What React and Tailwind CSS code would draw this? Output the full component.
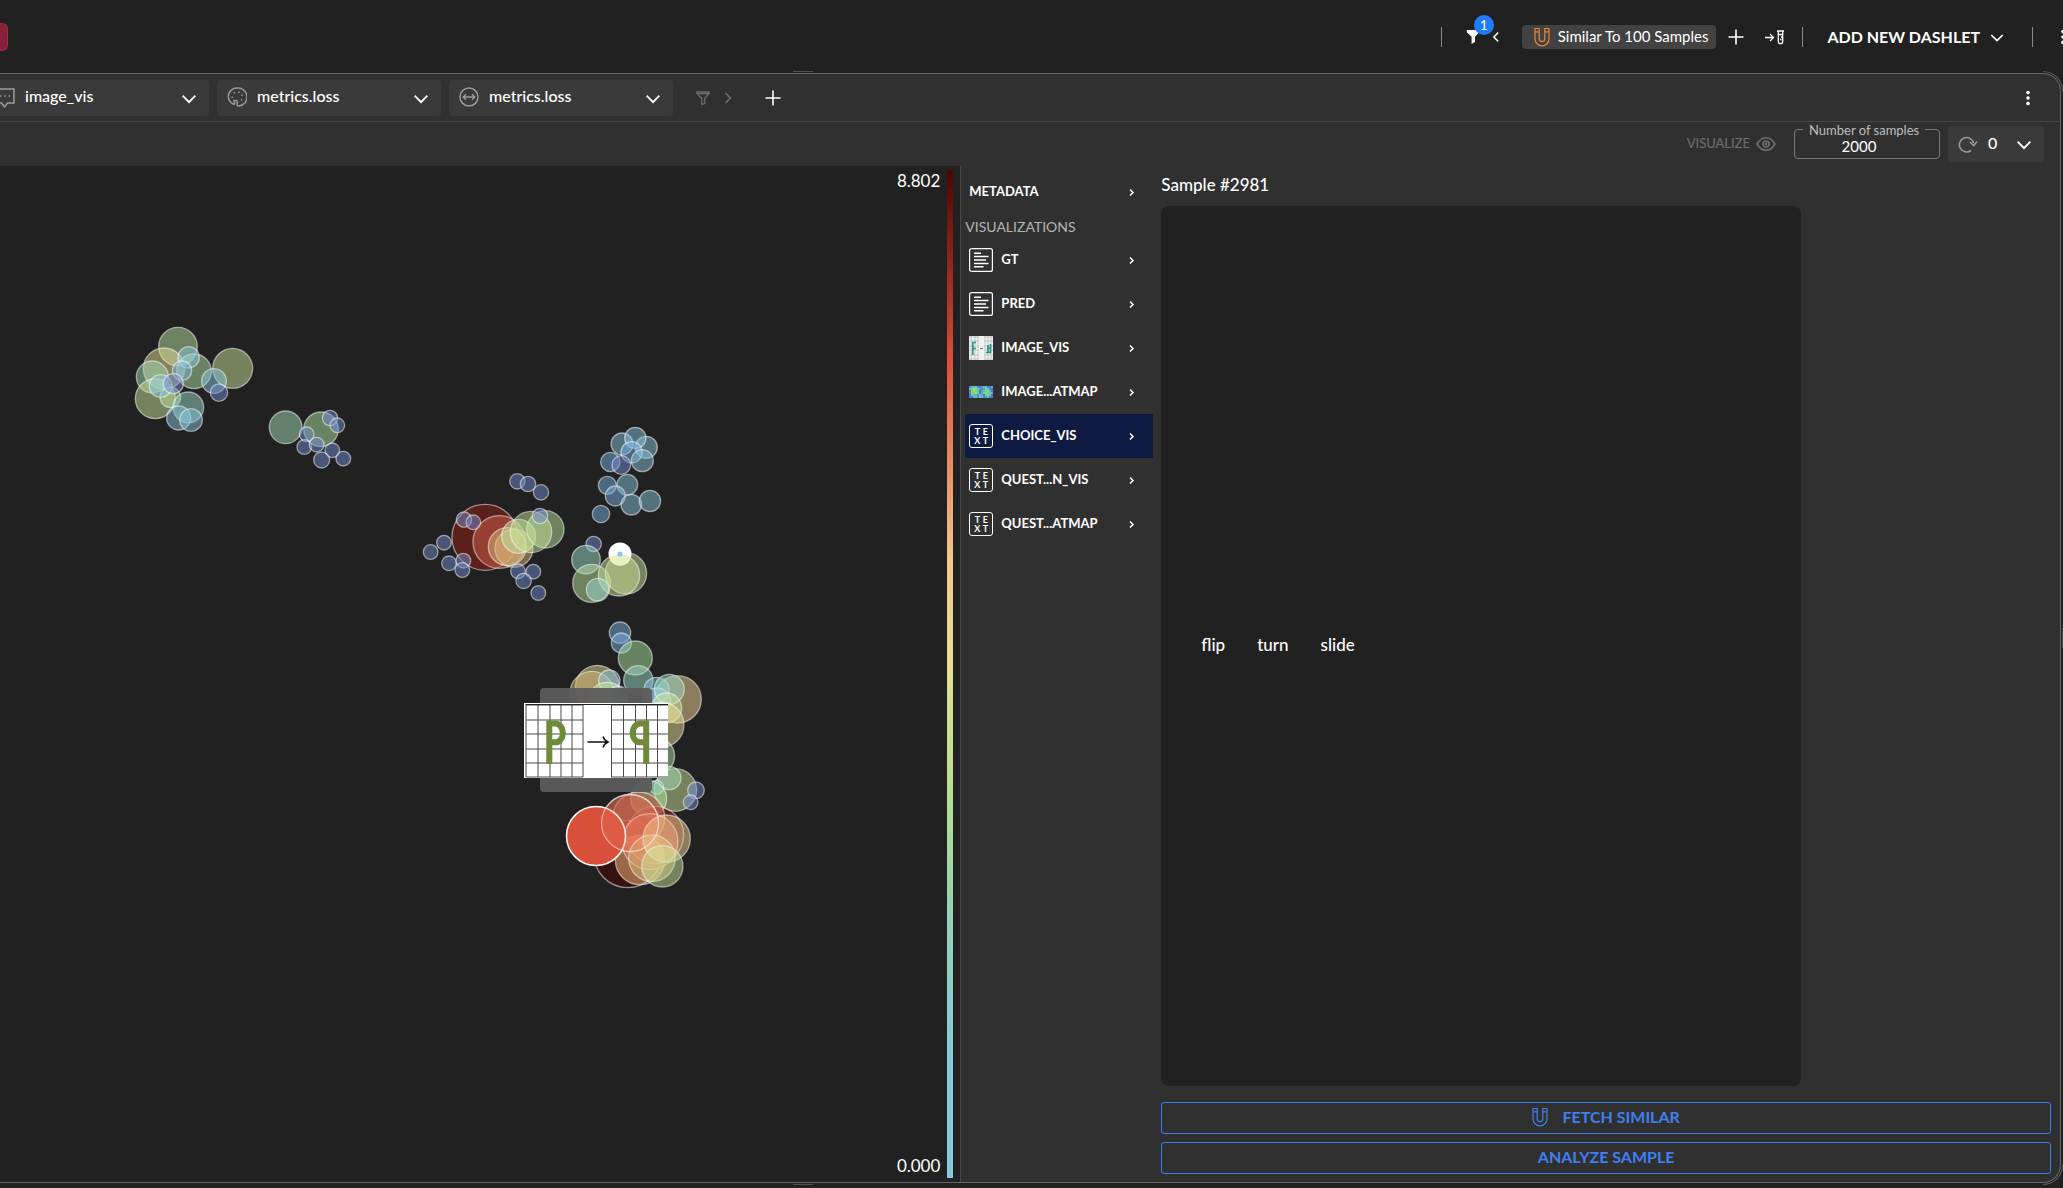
import React from "react";

const C = {
  khaki: "#cbe399",
  moss: "#b9e39f",
  green: "#afe5a3",
  sea: "#a3dfb7",
  teal: "#9ddbcb",
  aqua: "#87c3db",
  sky: "#77afe0",
  indigo: "#718bcd",
  tan: "#f3d797",
  sand: "#e7df97",
  ochre: "#d8b878",
  maroon: "#971f13",
  brick: "#d2604a",
  coral: "#ee7558",
  orange: "#ffbb7d",
  wine: "#4b0500",
};

/* Each cluster is drawn in its own space at three units to the pixel. */
const clusters = [
  {
    x: 120,
    y: 144,
    bubbles: [
      [174, 110, 58, C.moss],
      [132, 176, 62, C.sand],
      [222, 184, 52, C.green],
      [97, 201, 48, C.sea],
      [106, 266, 60, C.khaki],
      [338, 175, 60, C.khaki],
      [206, 142, 32, C.aqua],
      [186, 182, 29, C.sky],
      [151, 262, 31, C.moss],
      [122, 228, 34, C.aqua],
      [160, 221, 30, C.indigo],
      [282, 213, 37, C.aqua],
      [297, 248, 26, C.indigo],
      [205, 292, 46, C.teal],
      [176, 324, 36, C.aqua],
      [213, 330, 34, C.aqua],
      [497, 352, 49, C.sea],
      [603, 358, 52, C.green],
      [630, 324, 23, C.indigo],
      [652, 346, 22, C.indigo],
      [560, 373, 22, C.indigo],
      [553, 411, 22, C.indigo],
      [590, 404, 22, C.indigo],
      [637, 421, 22, C.indigo],
      [605, 450, 24, C.indigo],
      [670, 446, 22, C.indigo],
    ],
  },
  {
    x: 410,
    y: 244,
    bubbles: [
      [225, 382, 99, C.maroon],
      [268, 396, 79, C.brick],
      [312, 415, 57, C.ochre],
      [292, 410, 57, C.ochre],
      [326, 379, 51, C.moss],
      [406, 358, 56, C.moss],
      [363, 366, 62, C.khaki],
      [162, 329, 23, C.indigo],
      [190, 337, 22, C.indigo],
      [390, 318, 23, C.indigo],
      [322, 214, 23, C.indigo],
      [354, 222, 23, C.indigo],
      [393, 247, 23, C.indigo],
      [102, 398, 22, C.indigo],
      [62, 426, 22, C.indigo],
      [117, 460, 22, C.indigo],
      [160, 452, 22, C.indigo],
      [157, 480, 22, C.indigo],
      [324, 484, 22, C.indigo],
      [370, 485, 22, C.indigo],
      [341, 513, 23, C.indigo],
      [385, 549, 22, C.indigo],
      [636, 102, 33, C.aqua],
      [709, 112, 33, C.aqua],
      [676, 84, 32, C.aqua],
      [665, 127, 32, C.sky],
      [697, 152, 33, C.aqua],
      [601, 156, 29, C.sky],
      [634, 165, 28, C.indigo],
      [592, 226, 27, C.sky],
      [652, 224, 31, C.aqua],
      [616, 258, 30, C.sky],
      [664, 284, 31, C.aqua],
      [720, 273, 32, C.aqua],
      [573, 312, 26, C.sky],
      [551, 402, 23, C.indigo],
      [528, 449, 43, C.teal],
      [545, 520, 57, C.moss],
      [648, 490, 62, C.khaki],
      [627, 496, 62, C.khaki],
      [563, 539, 34, C.teal],
    ],
  },
  {
    x: 500,
    y: 444,
    bubbles: [
      [360, 68, 32, C.sky],
      [364, 99, 30, C.sky],
      [406, 144, 51, C.green],
      [292, 232, 66, C.sand],
      [276, 250, 66, C.ochre],
      [328, 212, 32, C.aqua],
      [322, 275, 58, C.khaki],
      [354, 258, 30, C.sky],
      [415, 211, 44, C.teal],
      [533, 268, 71, C.tan],
      [470, 240, 38, C.aqua],
      [470, 276, 42, C.aqua],
      [508, 238, 45, C.teal],
      [500, 294, 45, C.khaki],
      [484, 344, 68, C.sand],
      [470, 438, 54, C.green],
      [526, 540, 64, C.khaki],
      [508, 504, 35, C.sea],
      [470, 532, 21, C.aqua],
      [588, 541, 25, C.indigo],
      [572, 577, 22, C.indigo],
      [446, 566, 54, C.green],
      [383, 732, 101, C.wine],
      [465, 675, 86, C.maroon],
      [416, 624, 78, C.brick],
      [420, 750, 74, C.orange],
      [390, 640, 86, C.brick],
      [450, 695, 84, C.coral],
      [456, 745, 70, C.ochre],
      [500, 686, 71, C.tan],
      [487, 769, 62, C.khaki],
    ],
  },
];

const chevrons = {
  down: "M4 8.5l7 7 7-7",
  right: "M8 5l6 6-6 6",
  left: "M14 5l-6 6 6 6",
};

function Chevron({ dir = "down", className, weight = 2 }) {
  return (
    <svg viewBox="0 0 22 22" className={className} fill="none" stroke="currentColor" strokeWidth={weight} aria-hidden="true">
      <path d={chevrons[dir]} />
    </svg>
  );
}

function Magnet({ className }) {
  return (
    <svg viewBox="0 0 16 20" className={className} fill="none" stroke="currentColor" strokeWidth="1.2" aria-hidden="true">
      <path d="M1 1.5h4.2v10.3a2.8 2.8 0 0 0 5.6 0V1.5H15v10.3a7 7 0 0 1-14 0zM1 4.8h4.2M10.8 4.8H15" />
    </svg>
  );
}

function Plus({ className }) {
  return (
    <svg viewBox="0 0 16 16" className={className} stroke="currentColor" strokeWidth="1.6" aria-hidden="true">
      <path d="M8 0.5v15M0.5 8h15" />
    </svg>
  );
}

function Kebab() {
  return (
    <svg viewBox="0 0 4 16" className="h-4 w-1" fill="currentColor" aria-hidden="true">
      <circle cx="2" cy="2.6" r="1.8" />
      <circle cx="2" cy="8" r="1.8" />
      <circle cx="2" cy="13.4" r="1.8" />
    </svg>
  );
}

function Divider() {
  return <span className="h-5 w-px bg-[#8c8c8c]" />;
}

function Header() {
  return (
    <header className="flex h-[73px] shrink-0 items-center justify-between overflow-hidden text-white">
      <span className="h-7 w-2 rounded-r-md border border-l-0 border-[#b3243f] bg-[#8a1f3c]" />
      <div className="flex items-center">
        <Divider />
        <button aria-label="Filters" className="relative ml-6 flex items-center">
          <svg viewBox="0 0 14 14" className="h-[14px] w-[14px]" fill="currentColor" aria-hidden="true">
            <path d="M.8 0h12.400v2.200L9 6.800V12l-3.400 2V6.800L.8 2.200z" />
          </svg>
          <span className="absolute -top-[15px] left-2 flex h-5 w-5 items-center justify-center rounded-full bg-[#1f7bff] text-sm">1</span>
        </button>
        <button aria-label="Collapse filters" className="ml-2">
          <Chevron dir="left" className="h-4 w-4" />
        </button>
        <button className="ml-[18px] flex h-6 items-center gap-2 rounded bg-[#424242] pr-2 pl-3 text-[15px]">
          <Magnet className="h-5 w-4 text-[#e8873a]" />
          Similar To 100 Samples
        </button>
        <button aria-label="Add filter" className="ml-3">
          <Plus className="h-4 w-4" />
        </button>
        <button aria-label="Send to test" className="ml-5">
          <svg viewBox="0 0 22 16" className="h-4 w-[22px]" fill="none" stroke="currentColor" strokeWidth="1.3" aria-hidden="true">
            <path d="M1 8.500h8M6 5l3.500 3.500L6 12M13 2h7M14.300 2v10.500a2.200 2.200 0 0 0 4.400 0V2M14.300 5.500h4.400M17 8h1.500M16 10.500h1.500" />
          </svg>
        </button>
        <span className="ml-4 flex">
          <Divider />
        </span>
        <button className="ml-6 flex items-center gap-2 text-base font-bold">
          ADD NEW DASHLET
          <Chevron className="h-[18px] w-[18px]" />
        </button>
        <span className="ml-[26px] flex">
          <Divider />
        </span>
        <button aria-label="More options" className="-mr-0.5 ml-7">
          <Kebab />
        </button>
      </div>
    </header>
  );
}

const fieldIcons = {
  comment: (
    <path d="M1 2h18v14h-6.500l-3 4-3-4H1zM5 9h1.500M9.300 9h1.500M13.500 9H15" />
  ),
  palette: (
    <path d="M10 1a8.500 8.500 0 0 0-3.500 16.300c.8.300 1.300-.4 1-1.300l-.4-2.500h2.200c.6 0 .9.400.9 1v3.300c0 1 .8 1.500 1.700 1.200A8.900 8.900 0 0 0 10 1zM5.200 9.500v1.500M7.500 5v1.500M12 4.500V6M15 7.500V9M14.500 12v1.500" />
  ),
  size: <path d="M10 1a9 9 0 1 1 0 18 9 9 0 0 1 0-18zM4.500 10h11M7 7.200L4.300 10 7 12.800M13 7.200l2.700 2.800-2.700 2.800" />,
};

function FieldSelect({ icon, value, label }) {
  return (
    <label className="relative flex h-9 w-56 shrink-0 items-center rounded bg-[#3a3a3a]">
      <svg viewBox="0 0 20 21" className="pointer-events-none absolute left-[10px] h-[21px] w-5 text-[#9a9a9a]" fill="none" stroke="currentColor" strokeWidth="1.5" aria-hidden="true">
        {fieldIcons[icon]}
      </svg>
      <select aria-label={label} className="h-full w-full appearance-none bg-transparent pr-10 pb-1 pl-10 text-base font-medium text-white">
        <option>{value}</option>
      </select>
      <Chevron className="pointer-events-none absolute right-[10px] h-5 w-5 text-white" />
    </label>
  );
}

function TabBar() {
  return (
    <div className="flex h-12 shrink-0 items-center justify-between border-b border-[#464646] pr-[30px]">
      <div className="-ml-[15px] flex items-center gap-2">
        <FieldSelect icon="comment" value="image_vis" label="Preview" />
        <FieldSelect icon="palette" value="metrics.loss" label="Color" />
        <FieldSelect icon="size" value="metrics.loss" label="Size" />
        <div className="ml-[15px] flex items-center text-[#6c6c6c]">
          <button aria-label="Filter">
            <svg viewBox="0 0 14 14" className="h-[14px] w-[14px]" fill="none" stroke="currentColor" strokeWidth="1.3" aria-hidden="true">
              <path d="M1 1h12v1.500L8.700 7.500v5l-2.900 1v-6L1 2.500zM1 2.700h12" />
            </svg>
          </button>
          <button aria-label="Expand filter" className="ml-[9px]">
            <Chevron dir="right" className="h-[18px] w-[18px]" />
          </button>
        </div>
        <button aria-label="Add" className="ml-5 text-white">
          <Plus className="h-4 w-4" />
        </button>
      </div>
      <button aria-label="Dashlet options" className="text-white">
        <Kebab />
      </button>
    </div>
  );
}

function Toolbar() {
  return (
    <div className="flex h-11 shrink-0 items-center justify-end pr-4">
      <button className="mr-[18px] flex items-center gap-[6px] text-[13px] text-[#707070]">
        VISUALIZE
        <svg viewBox="0 0 20 16" className="h-4 w-5" fill="none" stroke="currentColor" strokeWidth="1.6" aria-hidden="true">
          <path d="M1 8c2.500-4.300 5.600-6.300 9-6.300S16.500 3.700 19 8c-2.500 4.300-5.600 6.300-9 6.300S3.500 12.300 1 8z" />
          <circle cx="10" cy="8" r="3" />
          <circle cx="10" cy="8" r="0.600" />
        </svg>
      </button>
      <fieldset className="mr-2 mb-2 w-[146px] rounded border border-[#7a7a7a]">
        <legend className="ml-2 px-[6px] text-[13px] leading-4 text-[#bdbdbd]">
          <label htmlFor="samples">Number of samples</label>
        </legend>
        <input id="samples" defaultValue="2000" className="-mt-1 block h-6 w-full bg-transparent pr-4 text-center text-[15px] text-white outline-none" />
      </fieldset>
      <label className="relative flex h-9 w-24 items-center rounded bg-[#3a3a3a]">
        <svg viewBox="0 0 20 18" className="pointer-events-none absolute left-[10px] h-[18px] w-5 text-[#9a9a9a]" fill="none" stroke="currentColor" strokeWidth="1.6" aria-hidden="true">
          <path d="M13 15.500A7.200 7.200 0 1 1 15.600 8M11.800 7l4 3.500L19 6.500" />
        </svg>
        <select aria-label="Refresh interval" className="h-full w-full appearance-none bg-transparent pb-0.5 pl-10 text-base font-medium text-white">
          <option>0</option>
        </select>
        <Chevron className="pointer-events-none absolute right-[10px] h-5 w-5 text-white" />
      </label>
    </div>
  );
}

function PreviewTooltip() {
  const cols = [0, 12, 24, 35, 46, 57];
  const rows = [2, 17, 31, 46, 60, 74];
  return (
    <div className="absolute top-[522px] left-[540px] flex h-[104px] w-28 items-center justify-center rounded bg-[#5c5c5c]/95">
      <svg viewBox="0 0 144 75" className="h-[75px] w-36 shrink-0" role="img" aria-label="Sample preview">
        <rect width="144" height="75" fill="#fff" />
        <g stroke="#4a4a4a" strokeWidth="1">
          {cols.map((c) => (
            <path key={c} d={`M${c + 2} 1v73M${c + 87.5} 1v73`} />
          ))}
          {rows.map((r) => (
            <path key={r} d={`M2 ${r}h57M87 ${r}h57`} />
          ))}
          <path d="M2 1.500h142" stroke="#222" />
        </g>
        <g fill="none" stroke="#6f8a38" strokeWidth="6">
          <path d="M25.300 61V20.500h6a7.500 9.300 0 0 1 0 18.800h-6" />
          <path d="M122.200 61V20.500h-6a7.500 9.300 0 0 0 0 18.800h6" />
        </g>
        <path d="M63.500 39H84M79 33.500c1 3 2.500 4.500 5 5.500-2.500 1-4 2.500-5 5.500" fill="none" stroke="#111" strokeWidth="1.400" />
      </svg>
    </div>
  );
}

function Scatter() {
  return (
    <section className="relative overflow-hidden border-r border-[#484848] bg-[#212121]">
      <svg className="absolute inset-0 h-full w-full" role="img" aria-label="Latent space scatter">
        {clusters.map((c) => (
          <g key={c.x} transform={`translate(${c.x} ${c.y}) scale(0.3333)`} stroke="#fff" strokeOpacity="0.5" strokeWidth="4" fillOpacity="0.5">
            {c.bubbles.map(([x, y, r, fill], i) => (
              <circle key={i} cx={x} cy={y} r={r} fill={fill} />
            ))}
          </g>
        ))}
        <circle cx="620" cy="388" r="11.500" fill="#fff" />
        <path d="M609 391a11.500 11.500 0 0 0 22 0q-11-5-22 0z" fill="#e8f0c4" />
        <circle cx="620" cy="388" r="2.600" fill="#93c1f5" />
        <circle cx="596" cy="670" r="29.500" fill="#d9503a" stroke="#fff" strokeWidth="1.500" />
        <circle cx="630" cy="657" r="28.500" fill="#f08a68" fillOpacity="0.2" stroke="#fff" strokeOpacity="0.5" strokeWidth="1.300" />
      </svg>
      <PreviewTooltip />
      <div className="relative ml-auto flex h-full w-fit gap-[7px] pt-1 pr-[7px] pb-1 text-[17px] text-white">
        <div className="flex flex-col justify-between">
          <span className="leading-[22px]">8.802</span>
          <span className="leading-6">0.000</span>
        </div>
        <div className="w-[6px] bg-[linear-gradient(to_bottom,#4d0500_0%,#8f251b_9%,#dc4f38_19%,#eb8a62_29%,#f5c98a_39%,#e9dd92_49%,#b6e08f_61%,#92d3b4_74%,#84cadc_88%)]" />
      </div>
    </section>
  );
}

function ListIcon() {
  return (
    <svg viewBox="0 0 24 24" className="h-6 w-6" fill="none" stroke="#fff" strokeWidth="1.2" aria-hidden="true">
      <rect x="0.600" y="0.600" width="22.800" height="22.800" rx="2" />
      <path d="M5 5.200h7M5 8.600h14.500M5 12h12M5 15.400h14.500M5 18.800h9.500" strokeWidth="1.500" />
    </svg>
  );
}

function TextIcon() {
  return (
    <span className="grid h-6 w-6 grid-cols-2 content-center justify-items-center rounded-[3px] border border-white px-[3px] text-[9px] leading-[9px] font-bold" aria-hidden="true">
      <span>T</span>
      <span>E</span>
      <span>X</span>
      <span>T</span>
    </span>
  );
}

function GridIcon() {
  return (
    <svg viewBox="0 0 24 24" className="h-6 w-6" aria-hidden="true">
      <rect width="24" height="24" fill="#f2f2f2" />
      <path d="M0 1h10M0 5h10M0 10h10M0 14h10M0 19h10M0 23h10M15 1h9M15 5h9M15 10h9M15 14h9M15 19h9M15 23h9M2 0v24M6 0v24M9 0v24M16 0v24M19 0v24M22 0v24" stroke="#bdbdbd" strokeWidth="0.800" />
      <path d="M3.800 19V6.500H7M3.800 12.500h3M21.500 8v8.500H17M19 9v7M19 12h2" fill="none" stroke="#1f9c82" strokeWidth="1.700" />
      <path d="M11 12.500h3" stroke="#777" strokeWidth="1.200" />
    </svg>
  );
}

const heat = [
  "#5a78d6", "#62b8d0", "#5fd0a0", "#58c8c8", "#5a8ce0", "#6470d0", "#50a8e0", "#58d098", "#60c0d8", "#5a80e0", "#6a78d8", "#58b0e0",
  "#58c0d8", "#60d880", "#b0d850", "#80e070", "#58d0b0", "#58a0e8", "#6078d8", "#5a98e0", "#70e078", "#58d0a8", "#5880e0", "#6a70d0",
  "#6878d8", "#58d890", "#e0b848", "#70e060", "#58c8c0", "#5870d8", "#c08050", "#58c0d0", "#60d8a0", "#80e068", "#58b8d8", "#5a78d8",
  "#5a90e0", "#70e078", "#68d890", "#a8e050", "#58d0b8", "#6868d0", "#58a0e0", "#60d888", "#90e058", "#58d0a0", "#60d890", "#58a8e0",
  "#7060c8", "#58c8b8", "#60d088", "#58b8d8", "#6880e0", "#58d0a0", "#58a8d8", "#5878d8", "#58c8c0", "#80e068", "#58c0d0", "#7068d0",
  "#5880d8", "#6868c8", "#58b0d8", "#58d0a8", "#5890e0", "#60d090", "#58c0c8", "#6878d8", "#5898e0", "#58c8b8", "#5880d8", "#6078d0",
];

function HeatIcon() {
  return (
    <svg viewBox="0 0 24 12" className="h-3 w-6" aria-hidden="true">
      {heat.map((fill, i) => (
        <rect key={i} x={(i % 12) * 2} y={Math.floor(i / 12) * 2} width="2" height="2" fill={fill} />
      ))}
    </svg>
  );
}

const items = [
  { label: "GT", icon: <ListIcon /> },
  { label: "PRED", icon: <ListIcon /> },
  { label: "IMAGE_VIS", icon: <GridIcon /> },
  { label: "IMAGE...ATMAP", icon: <HeatIcon /> },
  { label: "CHOICE_VIS", icon: <TextIcon />, active: true },
  { label: "QUEST...N_VIS", icon: <TextIcon /> },
  { label: "QUEST...ATMAP", icon: <TextIcon /> },
];

function Sidebar() {
  return (
    <nav className="w-[188px] shrink-0 pt-1 text-[13px] font-bold text-white">
      <button className="flex h-11 w-full items-center justify-between pr-4 pl-1">
        METADATA
        <Chevron dir="right" className="h-[11px] w-[11px]" weight={3} />
      </button>
      <h2 className="h-6 text-sm leading-[26px] font-normal text-[#b4b4b4]">VISUALIZATIONS</h2>
      {items.map((item) => (
        <button key={item.label} className={item.active ? "flex h-11 w-full items-center gap-2 bg-[#0f1a42] pr-4 pl-1" : "flex h-11 w-full items-center gap-2 pr-4 pl-1"}>
          {item.icon}
          <span className="flex-1 text-left">{item.label}</span>
          <Chevron dir="right" className="h-[11px] w-[11px]" weight={3} />
        </button>
      ))}
    </nav>
  );
}

function Detail() {
  return (
    <section className="flex min-w-0 flex-1 flex-col text-white">
      <h1 className="flex h-10 shrink-0 items-center pb-0.5 text-[17px] font-medium">Sample #2981</h1>
      <div className="flex w-full max-w-[640px] flex-1 items-center gap-8 rounded-lg bg-[#212121] pb-0.5 pl-10 text-[17px] font-medium">
        <span>flip</span>
        <span>turn</span>
        <span>slide</span>
      </div>
      <div className="mt-4 mb-2 flex flex-col gap-2 text-base font-bold text-[#3f7ff0]">
        <button className="flex h-8 items-center justify-center gap-[14px] rounded-[3px] border border-[#3f7ff0] pb-0.5">
          <Magnet className="h-5 w-4" />
          FETCH SIMILAR
        </button>
        <button className="h-8 rounded-[3px] border border-[#3f7ff0] pb-0.5">ANALYZE SAMPLE</button>
      </div>
    </section>
  );
}

export default function App() {
  return (
    <div className="flex h-screen flex-col overflow-hidden bg-[#212121] font-['Lato','Noto_Sans',sans-serif]">
      <Header />
      <main className="relative mr-0.5 mb-[5px] flex min-h-0 flex-1 flex-col">
        <span className="absolute -top-0.5 left-[793px] h-px w-5 bg-[#505050]" />
        <span className="absolute -bottom-0.5 left-[793px] h-px w-5 bg-[#505050]" />
        <span className="absolute -top-0.5 -right-0.5 h-5 w-5 rounded-tr-[20px] border-t border-r border-[#5a5a5a]" />
        <span className="absolute -right-0.5 -bottom-0.5 h-5 w-5 rounded-br-[20px] border-r border-b border-[#5a5a5a]" />
        <span className="absolute top-1/2 -right-0.5 h-5 w-px bg-[#505050]" />
        <div className="flex min-h-0 flex-1 flex-col overflow-hidden rounded-r-[18px] border border-l-0 border-[#666666] bg-[#303030]">
          <TabBar />
          <Toolbar />
          <div className="grid min-h-0 flex-1 grid-cols-[7fr_8fr]">
            <Scatter />
            <div className="flex min-w-0 gap-2 pr-[9px] pl-1">
              <Sidebar />
              <Detail />
            </div>
          </div>
        </div>
      </main>
    </div>
  );
}
